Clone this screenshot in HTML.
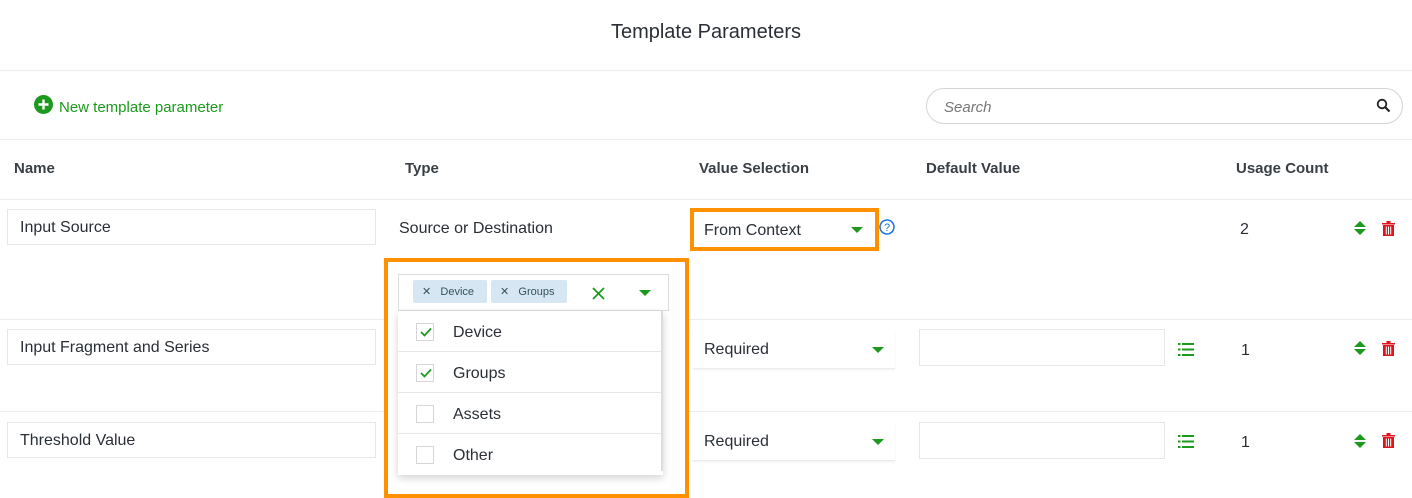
<!DOCTYPE html>
<html><head><style>
*{box-sizing:border-box;margin:0;padding:0}
body{width:1412px;height:496px;overflow:hidden;background:#fff;font-family:"Liberation Sans",sans-serif;color:#2a2f36;position:relative}
.a{position:absolute}
.line{position:absolute;left:0;width:1412px;height:1px;background:#ececec}
.inp{position:absolute;border:1px solid #e6e6e6;background:#fff;font-size:16px;padding-left:12px;padding-top:2px;display:flex;align-items:center}
.th{position:absolute;top:160px;font-size:15px;font-weight:bold;color:#3a3f46}
.sel{position:absolute;font-size:16px;display:flex;align-items:center;padding-left:11px;padding-top:2px;border-bottom:1px solid #ececec;box-shadow:0 1px 2px rgba(0,0,0,.06)}
.tri{position:absolute;width:0;height:0;border-left:6px solid transparent;border-right:6px solid transparent;border-top:6px solid #1d9a1d}
.txt{position:absolute;font-size:16px}
.mi{position:absolute;left:398px;width:265px;height:41px;border-bottom:1px solid #e8e8e8;font-size:16px}
.cb{position:absolute;left:18px;top:12px;width:18px;height:18px;border:1px solid #d6d6d6}
</style></head><body>
<div class="a" style="left:0;top:21px;width:1412px;text-align:center;font-size:20px;color:#2a2f36">Template Parameters</div>
<div class="line" style="top:70px"></div>
<svg class="a" style="left:34px;top:95px" width="19" height="19" viewBox="0 0 19 19"><circle cx="9.5" cy="9.5" r="9.5" fill="#1d9a1d"/><path d="M9.5 4.5v10M4.5 9.5h10" stroke="#fff" stroke-width="2.4"/></svg>
<div class="a" style="left:59px;top:99px;font-size:15px;color:#1d9a1d">New template parameter</div>
<div class="a" style="left:926px;top:88px;width:477px;height:36px;border:1px solid #d4d4d4;border-radius:18px;font-size:15px;font-style:italic;color:#777;padding:10px 0 0 17px">Search</div>
<svg class="a" style="left:1376px;top:98px" width="15" height="15" viewBox="0 0 15 15"><circle cx="6" cy="6" r="4.3" fill="none" stroke="#222" stroke-width="1.8"/><path d="M9 9l4.5 4.5" stroke="#222" stroke-width="2.2"/></svg>
<div class="line" style="top:139px"></div>
<div class="th" style="left:14px">Name</div>
<div class="th" style="left:405px">Type</div>
<div class="th" style="left:699px">Value Selection</div>
<div class="th" style="left:926px">Default Value</div>
<div class="th" style="left:1236px">Usage Count</div>
<div class="line" style="top:199px"></div>

<div class="inp" style="left:7px;top:209px;width:369px;height:36px">Input Source</div>
<div class="txt" style="left:399px;top:220px">Source or Destination</div>
<div class="a" style="left:690px;top:208px;width:189px;height:43px;border:4px solid #ff9000"></div>
<div class="txt" style="left:704px;top:222px">From Context</div>
<div class="tri" style="left:851px;top:227px"></div>
<svg class="a" style="left:879px;top:219px" width="16" height="16" viewBox="0 0 16 16"><circle cx="8" cy="8" r="7" fill="none" stroke="#1a73e8" stroke-width="1.5"/><text x="8" y="12" font-size="11" text-anchor="middle" fill="#1a73e8" font-family="Liberation Sans">?</text></svg>
<div class="txt" style="left:1240px;top:221px">2</div>

<div class="line" style="top:319px"></div>
<div class="inp" style="left:7px;top:329px;width:369px;height:36px">Input Fragment and Series</div>
<div class="sel" style="left:693px;top:330px;width:202px;height:39px">Required</div>
<div class="tri" style="left:872px;top:347px"></div>
<div class="inp" style="left:919px;top:329px;width:246px;height:37px"></div>
<div class="txt" style="left:1241px;top:342px">1</div>

<div class="line" style="top:411px"></div>
<div class="inp" style="left:7px;top:422px;width:369px;height:36px">Threshold Value</div>
<div class="sel" style="left:693px;top:422px;width:202px;height:39px">Required</div>
<div class="tri" style="left:872px;top:439px"></div>
<div class="inp" style="left:919px;top:422px;width:246px;height:37px"></div>
<div class="txt" style="left:1241px;top:434px">1</div>

<svg class="a" style="left:1178px;top:343px" width="16" height="13" viewBox="0 0 16 13"><g fill="#1d9a1d"><rect x="0" y="0" width="2.5" height="2"/><rect x="4" y="0" width="12" height="2"/><rect x="0" y="5.5" width="2.5" height="2"/><rect x="4" y="5.5" width="12" height="2"/><rect x="0" y="11" width="2.5" height="2"/><rect x="4" y="11" width="12" height="2"/></g></svg>
<svg class="a" style="left:1178px;top:435px" width="16" height="13" viewBox="0 0 16 13"><g fill="#1d9a1d"><rect x="0" y="0" width="2.5" height="2"/><rect x="4" y="0" width="12" height="2"/><rect x="0" y="5.5" width="2.5" height="2"/><rect x="4" y="5.5" width="12" height="2"/><rect x="0" y="11" width="2.5" height="2"/><rect x="4" y="11" width="12" height="2"/></g></svg>

<svg class="a" style="left:1354px;top:221px" width="12" height="14" viewBox="0 0 12 14"><path d="M6 0L12 6H0zM0 8h12L6 14z" fill="#1d9a1d"/></svg>
<svg class="a" style="left:1354px;top:341px" width="12" height="14" viewBox="0 0 12 14"><path d="M6 0L12 6H0zM0 8h12L6 14z" fill="#1d9a1d"/></svg>
<svg class="a" style="left:1354px;top:434px" width="12" height="14" viewBox="0 0 12 14"><path d="M6 0L12 6H0zM0 8h12L6 14z" fill="#1d9a1d"/></svg>
<svg class="a" style="left:1382px;top:221px" width="13" height="15" viewBox="0 0 13 15"><path d="M0 2h13v1.5H0zM4.5 0h4v2h-4zM1 4h11v11H1z" fill="#e0141e"/><path d="M4.3 5.5v8M6.5 5.5v8M8.7 5.5v8" stroke="#fff" stroke-width="1"/></svg>
<svg class="a" style="left:1382px;top:341px" width="13" height="15" viewBox="0 0 13 15"><path d="M0 2h13v1.5H0zM4.5 0h4v2h-4zM1 4h11v11H1z" fill="#e0141e"/><path d="M4.3 5.5v8M6.5 5.5v8M8.7 5.5v8" stroke="#fff" stroke-width="1"/></svg>
<svg class="a" style="left:1382px;top:433px" width="13" height="15" viewBox="0 0 13 15"><path d="M0 2h13v1.5H0zM4.5 0h4v2h-4zM1 4h11v11H1z" fill="#e0141e"/><path d="M4.3 5.5v8M6.5 5.5v8M8.7 5.5v8" stroke="#fff" stroke-width="1"/></svg>

<div class="a" style="left:384px;top:258px;width:305px;height:240px;border:4px solid #ff9000;background:#fff"></div>
<div class="a" style="left:398px;top:274px;width:271px;height:37px;border:1px solid #dcdcdc;background:#fff"></div>
<div class="a" style="left:413px;top:280px;width:74px;height:23px;background:#d6e6f3;border-radius:2px;font-size:11px;color:#355;padding:5px 0 0 9px">✕&nbsp;&nbsp;&nbsp;Device</div>
<div class="a" style="left:491px;top:280px;width:76px;height:23px;background:#d6e6f3;border-radius:2px;font-size:11px;color:#355;padding:5px 0 0 9px">✕&nbsp;&nbsp;&nbsp;Groups</div>
<svg class="a" style="left:592px;top:287px" width="13" height="13" viewBox="0 0 13 13"><path d="M1 1l11 11M12 1L1 12" stroke="#1d9a1d" stroke-width="1.8"/></svg>
<div class="tri" style="left:639px;top:290px"></div>
<div class="a" style="left:398px;top:311px;width:265px;height:164px;background:#fff;box-shadow:0 3px 8px rgba(0,0,0,.18)"></div>
<div class="mi" style="top:311px"><div class="cb"></div><svg class="a" style="left:22px;top:16px" width="12" height="10" viewBox="0 0 12 10"><path d="M1 5l3.5 3.5L11 1.5" fill="none" stroke="#1d9a1d" stroke-width="1.8"/></svg><span class="a" style="left:55px;top:13px">Device</span></div>
<div class="mi" style="top:352px"><div class="cb"></div><svg class="a" style="left:22px;top:16px" width="12" height="10" viewBox="0 0 12 10"><path d="M1 5l3.5 3.5L11 1.5" fill="none" stroke="#1d9a1d" stroke-width="1.8"/></svg><span class="a" style="left:55px;top:13px">Groups</span></div>
<div class="mi" style="top:393px"><div class="cb"></div><span class="a" style="left:55px;top:13px">Assets</span></div>
<div class="mi" style="top:434px;border-bottom:none"><div class="cb"></div><span class="a" style="left:55px;top:13px">Other</span></div>
<div class="a" style="left:661px;top:311px;width:2px;height:160px;background:#ddd"></div>
</body></html>
